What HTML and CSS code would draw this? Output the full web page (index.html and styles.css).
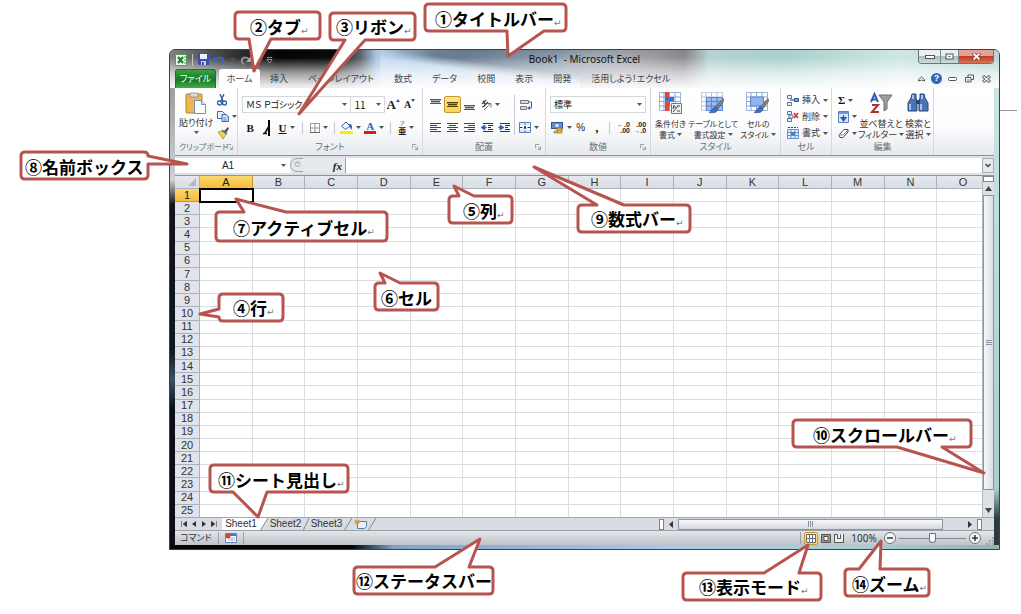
FILE: index.html
```html
<!DOCTYPE html>
<html lang="ja">
<head>
<meta charset="utf-8">
<title>Book1 - Microsoft Excel</title>
<link rel="stylesheet" href="styles.css">
</head>
<body>
<svg class="defs" aria-hidden="true">
  <symbol id="caret" viewBox="0 0 5 3"><path d="M0 0h5L2.500 3z" fill="#555"/></symbol>
  <symbol id="launch" viewBox="0 0 7 7"><path d="M.5 5V.5H5M3 3l3 3M6.500 3v3.500H3" fill="none" stroke="#8a929c"/></symbol>
  <symbol id="grid" viewBox="0 0 22 20"><path d="M.5 .5h21v18H.5z" fill="#fff" stroke="#9db3d6"/><path d="M5 .5v18M10.500 .5v18M16 .5v18M.5 5h21M.5 9.500h21M.5 14h21" stroke="#8ba6d0" fill="none"/></symbol>
  <symbol id="brush" viewBox="0 0 14 14"><path d="M13 0L6 8l2 2 6-8z" fill="#8b8378" stroke="#4d4a48" stroke-width=".6"/><path d="M6 7.500C3 8 3 12 0 13c4 1 8 0 8.500-3.500z" fill="#3f6fbd" stroke="#2c4f92" stroke-width=".5"/></symbol>
</svg>

<main class="window">
  <header class="chrome">
    <div class="titlebar">
      <div class="quick">
        <svg width="12" height="12" viewBox="0 0 12 12"><rect x=".5" y=".5" width="11" height="11" rx="1" fill="#eaf6e6" stroke="#4f9c4a"/><path d="M3 3l5 6M8 3L3 9" stroke="#1d7a2c" stroke-width="2"/><path d="M9 3h2M9 6h2M9 9h2" stroke="#59a957"/></svg>
        <i class="rule"></i>
        <button type="button" aria-label="上書き保存"><svg width="11" height="11" viewBox="0 0 11 11"><path d="M0 0h11v11H1L0 10z" fill="#3d4fae"/><path d="M2 0h7v5H2z" fill="#eef2fb"/><path d="M3 7h5v4H3z" fill="#c9d3ea"/><path d="M4 8h1.500v3H4z" fill="#26357f"/></svg></button>
        <button type="button" aria-label="元に戻す"><svg width="11" height="10" viewBox="0 0 11 10"><path d="M2 4c4-3 8-1 7 3q-.5 1.500-2 2" fill="none" stroke="#3b66b4" stroke-width="2"/><path d="M0 1v6h5z" fill="#3b66b4"/></svg></button>
        <svg class="caret" aria-hidden="true"><use href="#caret"/></svg>
        <button type="button" aria-label="やり直し"><svg width="11" height="10" viewBox="0 0 11 10"><path d="M9 4C5 1 1 3 2 7q.5 1.500 2 2" fill="none" stroke="#8d9196" stroke-width="2"/><path d="M11 1v6H6z" fill="#a7abb0"/></svg></button>
        <button type="button" class="custom" aria-label="カスタマイズ"><svg width="7" height="6" viewBox="0 0 7 6"><path d="M1 .5h5M1 2.500h5L3.500 6z" stroke="#ddd" stroke-width=".6" fill="#111"/></svg></button>
      </div>
      <h1>Book1&nbsp; - Microsoft Excel</h1>
      <div class="controls">
        <button type="button" class="min" aria-label="最小化"><svg width="10" height="4"><rect x=".5" y=".5" width="9" height="3" fill="#fff" stroke="#555"/></svg></button>
        <button type="button" class="max" aria-label="最大化"><svg width="9" height="7"><rect x="1" y="1" width="7" height="5" fill="#fff" stroke="#555"/><path d="M3.500 3.500h2" stroke="#555"/></svg></button>
        <button type="button" class="close" aria-label="閉じる"><svg width="9" height="7" viewBox="0 0 9 7"><path d="M1 0l7 7M8 0L1 7" stroke="#6b3b37" stroke-width="3.200"/><path d="M1.500 .5l6 6M7.500 .5l-6 6" stroke="#fff" stroke-width="1.800"/></svg></button>
      </div>
    </div>
    <nav class="tabs">
      <button type="button" class="file">ファイル</button>
      <button type="button" class="active">ホーム</button>
      <button type="button">挿入</button>
      <button type="button">ページレイアウト</button>
      <button type="button">数式</button>
      <button type="button">データ</button>
      <button type="button">校閲</button>
      <button type="button">表示</button>
      <button type="button">開発</button>
      <button type="button">活用しよう！エクセル</button>
      <div class="book-tools">
        <button type="button" aria-label="リボンの最小化"><svg width="7" height="6"><path d="M.5 5V3.500L3.500 1l3 2.500V5L3.500 4z" fill="#fff" stroke="#555"/></svg></button>
        <button type="button" aria-label="ヘルプ" class="help">?</button>
        <button type="button" aria-label="ブックの最小化"><svg width="9" height="4"><rect x=".5" y=".5" width="8" height="3" rx="1" fill="#fff" stroke="#555"/></svg></button>
        <button type="button" aria-label="元のサイズに戻す"><svg width="9" height="9"><path d="M3 3V1h5.500v4.500H6M.5 3.500h5.500v4.500H.5zM2 6h2.500" fill="#fff" stroke="#555"/></svg></button>
        <button type="button" aria-label="ブックを閉じる"><svg width="9" height="8"><path d="M1 1l7 6M8 1L1 7" stroke="#555" stroke-width="3"/><path d="M1.500 1.500l6 5M7.500 1.500l-6 5" stroke="#fff" stroke-width="1.200"/></svg></button>
      </div>
    </nav>
  </header>

  <section class="ribbon" aria-label="ホーム">
    <div class="group clipboard">
      <div class="tools">
        <button type="button" class="big paste"><svg width="22" height="22" viewBox="0 0 22 22"><rect x="1" y="2" width="16" height="19" rx="1" fill="#edb64f" stroke="#b98226"/><path d="M5 1h8v4H5z" fill="#d9dde2" stroke="#7a828c" stroke-width=".7"/><path d="M9.500 8.500h7l4 4v9h-11z" fill="#fafcff" stroke="#7890b5"/><path d="M16.500 8.500v4h4" fill="#d7e2f3" stroke="#7890b5"/></svg>貼り付け<svg class="caret"><use href="#caret"/></svg></button>
        <div class="stack">
          <button type="button" aria-label="切り取り"><svg width="10" height="12" viewBox="0 0 10 12"><path d="M3 0l3 7M7 0L4 7" stroke="#35558f" stroke-width="1.300"/><circle cx="2.500" cy="9" r="2" fill="none" stroke="#2f5eb5" stroke-width="1.400"/><circle cx="7.500" cy="9" r="2" fill="none" stroke="#2f5eb5" stroke-width="1.400"/></svg></button>
          <button type="button" aria-label="コピー"><svg width="12" height="11" viewBox="0 0 12 11"><path d="M.5 .5h5l2 2v5h-7z" fill="#eaf1fc" stroke="#3d66b2"/><path d="M5 3.500h4l2.500 2v5H5z" fill="#cfdff7" stroke="#3d66b2"/><path d="M6.500 7h3M6.500 9h3" stroke="#3d66b2" stroke-width=".7"/></svg><svg class="caret"><use href="#caret"/></svg></button>
          <button type="button" aria-label="書式のコピー"><svg width="12" height="12" viewBox="0 0 12 12"><path d="M7 4l4-4 1 1.500L9 6z" fill="#4d4d66"/><path d="M1 5l4-1 4 3-3 5z" fill="#f2d255" stroke="#a68425" stroke-width=".7"/><path d="M5 3l5 4" stroke="#58627a" stroke-width="1.400"/></svg></button>
        </div>
      </div>
      <h2>クリップボード<svg class="launch"><use href="#launch"/></svg></h2>
    </div>

    <div class="group font">
      <div class="tools column">
        <div class="line">
          <label class="combo wide"><input type="text" value="ＭＳ Ｐゴシック" aria-label="フォント"><svg class="caret"><use href="#caret"/></svg></label>
          <label class="combo size"><input type="text" value="11" aria-label="フォント サイズ"><svg class="caret"><use href="#caret"/></svg></label>
          <button type="button" class="grow" aria-label="フォント サイズの拡大">A<svg width="4" height="3"><path d="M0 3h4L2 0z" fill="#2b55b5"/></svg></button>
          <button type="button" class="shrink" aria-label="フォント サイズの縮小">A<svg width="4" height="3"><path d="M0 0h4L2 3z" fill="#2b55b5"/></svg></button>
        </div>
        <div class="line">
          <button type="button" class="glyph"><b>B</b></button>
          <button type="button" class="glyph" aria-label="斜体"><svg width="8" height="18" viewBox="0 0 8 18"><path d="M6 1v16" stroke="#000" stroke-width="2"/><path d="M6 7l-4 7M0 14.500h4" stroke="#111" stroke-width="1.600"/></svg></button>
          <button type="button" class="glyph drop"><u>U</u><svg class="caret"><use href="#caret"/></svg></button>
          <i class="rule"></i>
          <button type="button" class="drop" aria-label="罫線"><svg width="10" height="10"><path d="M.5 .5h9v9h-9zM5 0v10M0 5h10" fill="none" stroke="#999"/><path d="M0 9.500h10" stroke="#666"/></svg><svg class="caret"><use href="#caret"/></svg></button>
          <i class="rule"></i>
          <button type="button" class="drop" aria-label="塗りつぶしの色"><svg width="13" height="13" viewBox="0 0 13 13"><path d="M1.500 5L6 1l4 4-4.500 3.500z" fill="#f3f6fb" stroke="#3f5f95"/><path d="M9 3c3 0 3.500 2 2.500 6C10 7 10 6 9 5z" fill="#2f62b8"/><path d="M0 10h13v3H0z" fill="#ffee00"/></svg><svg class="caret"><use href="#caret"/></svg></button>
          <button type="button" class="drop color" aria-label="フォントの色"><span>A</span><svg class="caret"><use href="#caret"/></svg></button>
          <i class="rule"></i>
          <button type="button" class="drop" aria-label="ふりがな"><span class="ruby"><small>ア</small><b>亜</b></span><svg class="caret"><use href="#caret"/></svg></button>
        </div>
      </div>
      <h2>フォント<svg class="launch"><use href="#launch"/></svg></h2>
    </div>

    <div class="group align">
      <div class="tools">
        <div class="column">
          <div class="line">
            <button type="button" aria-label="上揃え"><svg width="11" height="13"><path d="M0 1.500h11M1 3.500h9M0 5.500h11" stroke="#555"/><path d="M0 2.500h11M1 4.500h9" stroke="#b5b5b5"/></svg></button>
            <button type="button" class="on" aria-label="上下中央揃え"><svg width="11" height="13"><path d="M0 4.500h11M1 6.500h9M0 8.500h11" stroke="#554200"/><path d="M0 5.500h11M1 7.500h9" stroke="#bd9531"/></svg></button>
            <button type="button" aria-label="下揃え"><svg width="11" height="13"><path d="M0 7.500h11M1 9.500h9M0 11.500h11" stroke="#555"/><path d="M0 8.500h11M1 10.500h9" stroke="#b5b5b5"/></svg></button>
            <button type="button" class="drop" aria-label="方向"><svg width="11" height="11" viewBox="0 0 11 11"><path d="M1 5l4-4M3 7l4-4M2 2l3 4M1 8l3-1" stroke="#444" stroke-width="1.300"/><path d="M3 11l6-6M6 4.500h4v4" stroke="#777" fill="none"/></svg><svg class="caret"><use href="#caret"/></svg></button>
          </div>
          <div class="line">
            <button type="button" aria-label="左揃え"><svg width="11" height="9"><path d="M0 .5h11M0 2.500h7M0 4.500h11M0 6.500h7M0 8.500h11" stroke="#444"/></svg></button>
            <button type="button" aria-label="中央揃え"><svg width="11" height="9"><path d="M0 .5h11M2 2.500h7M0 4.500h11M2 6.500h7M0 8.500h11" stroke="#444"/></svg></button>
            <button type="button" aria-label="右揃え"><svg width="11" height="9"><path d="M0 .5h11M4 2.500h7M0 4.500h11M4 6.500h7M0 8.500h11" stroke="#444"/></svg></button>
            <button type="button" aria-label="インデントを減らす"><svg width="12" height="9"><path d="M2 .5h10M7 2.500h5M7 4.500h3M7 6.500h5M2 8.500h10" stroke="#333"/><path d="M0 4.500L4 2v5zM3 4.500h3" fill="#2b5fc0" stroke="#2b5fc0" stroke-width=".8"/></svg></button>
            <button type="button" aria-label="インデントを増やす"><svg width="12" height="9"><path d="M2 .5h10M7 2.500h5M7 4.500h3M7 6.500h5M2 8.500h10" stroke="#333"/><path d="M6 4.500L2 2v5zM0 4.500h3" fill="#2b5fc0" stroke="#2b5fc0" stroke-width=".8"/></svg></button>
          </div>
        </div>
        <i class="rule tall"></i>
        <div class="column">
          <div class="line"><button type="button" aria-label="折り返して全体を表示する"><svg width="12" height="12" viewBox="0 0 12 12"><path d="M.5 1.500h8v3h-8zM.5 7.500h6v3h-6z" fill="#cfdcf0" stroke="#777"/><path d="M9 3h2.500v6H9" fill="none" stroke="#2f62b8"/><path d="M7 9l3-2v4z" fill="#2f62b8"/></svg></button></div>
          <div class="line"><button type="button" class="drop" aria-label="セルを結合して中央揃え"><svg width="12" height="11" viewBox="0 0 12 11"><path d="M.5 .5h11v10H.5zM6 0v3M6 8v3" fill="#dce8f8" stroke="#5d7fb5"/><path d="M1 3.500h10v4H1z" fill="#fff"/><path d="M1 5.500h2.500M8.500 5.500H11M5 7l1-3 1 3" stroke="#333" fill="none"/></svg><svg class="caret"><use href="#caret"/></svg></button></div>
        </div>
      </div>
      <h2>配置<svg class="launch"><use href="#launch"/></svg></h2>
    </div>

    <div class="group number">
      <div class="tools column">
        <div class="line"><label class="combo full"><input type="text" value="標準" aria-label="表示形式"><svg class="caret"><use href="#caret"/></svg></label></div>
        <div class="line">
          <button type="button" class="drop currency" aria-label="通貨表示形式"><svg width="13" height="12" viewBox="0 0 13 12"><rect x=".5" y=".5" width="11" height="6" fill="#5e8edc" stroke="#2e5197"/><circle cx="6" cy="3.500" r="1.700" fill="#dbe7fa"/><path d="M6 6h5v5H6z" fill="#e8bd45" stroke="#9d7620" stroke-width=".8"/><path d="M6 8h5M3 9h3v2H3z" stroke="#9d7620" stroke-width=".8" fill="#ecd06e"/></svg><svg class="caret"><use href="#caret"/></svg></button>
          <button type="button" class="pct">%</button>
          <button type="button" class="comma">,</button>
          <i class="rule"></i>
          <button type="button" class="dec" aria-label="小数点以下の表示桁数を増やす"><span><em>←</em>.0</span><span>.00</span></button>
          <button type="button" class="dec" aria-label="小数点以下の表示桁数を減らす"><span>.00</span><span><em>→</em>.0</span></button>
        </div>
      </div>
      <h2>数値<svg class="launch"><use href="#launch"/></svg></h2>
    </div>

    <div class="group style">
      <div class="tools">
        <button type="button" class="big"><svg width="24" height="23" viewBox="0 0 24 23"><use href="#grid" width="22" height="20"/><path d="M6 0h4v5H6zM6 14h4v5H6z" fill="#e0473a"/><path d="M6 5h9v4.500H6z" fill="#3f6fd0"/><path d="M6 10h5v4H6z" fill="#e0473a"/><path d="M12.500 11.500h10v10h-10z" fill="#eef2f7" stroke="#777"/><path d="M14 15h3M15 13l-1 4M18 14h3M18 19h3M14 20l5-6" stroke="#444"/></svg>条件付き<span>書式<svg class="caret"><use href="#caret"/></svg></span></button>
        <button type="button" class="big"><svg width="24" height="23" viewBox="0 0 24 23"><path d="M5 5h16v13H5z" fill="#86aef0"/><use href="#grid" width="22" height="20" opacity=".65"/><path d="M5.500 5.500h16v13h-16zM10.500 5v13M16 5v13M5 9.500h16M5 14h16" fill="#79a5ee" fill-opacity=".6" stroke="#5b86cf"/><use href="#brush" x="8" y="6" width="15" height="16"/></svg>テーブルとして<span>書式設定<svg class="caret"><use href="#caret"/></svg></span></button>
        <button type="button" class="big"><svg width="24" height="23" viewBox="0 0 24 23"><use href="#grid" width="22" height="20"/><path d="M4.500 5h13v9h-13z" fill="#8eb4f2" stroke="#5b86cf"/><use href="#brush" x="8" y="6" width="15" height="16"/></svg>セルの<span>スタイル<svg class="caret"><use href="#caret"/></svg></span></button>
      </div>
      <h2>スタイル</h2>
    </div>

    <div class="group cell">
      <div class="tools stack">
        <button type="button"><svg width="12" height="11" viewBox="0 0 12 11"><path d="M.5 .5h4v3h-4zM.5 7.500h4v3h-4z" fill="#e8effa" stroke="#5576ab"/><path d="M7.500 3.500h4v3h-4z" fill="#7fa6e6" stroke="#2f4f90"/><path d="M3 5h4" stroke="#333"/></svg>挿入<svg class="caret"><use href="#caret"/></svg></button>
        <button type="button"><svg width="12" height="11" viewBox="0 0 12 11"><path d="M.5 .5h4v3h-4zM.5 7.500h4v3h-4zM2 4h4v3H2z" fill="#e8effa" stroke="#5576ab"/><path d="M7 2l4 5M11 2L7 7" stroke="#d9392b" stroke-width="1.700"/></svg>削除<svg class="caret"><use href="#caret"/></svg></button>
        <button type="button"><svg width="12" height="12" viewBox="0 0 12 12"><path d="M.5 2.500h11v9H.5zM4 2v9M8 2v9M0 8.500h12M0 5.500h12" fill="#e3edfb" stroke="#6e8fc4"/><path d="M4 5h4v3H4z" fill="#4879cf"/><path d="M1 .5h10" stroke="#444" stroke-dasharray="2 1"/></svg>書式<svg class="caret"><use href="#caret"/></svg></button>
      </div>
      <h2>セル</h2>
    </div>

    <div class="group edit">
      <div class="tools">
        <div class="stack">
          <button type="button" class="sigma">Σ<svg class="caret"><use href="#caret"/></svg></button>
          <button type="button" aria-label="フィル"><svg width="11" height="12" viewBox="0 0 11 12"><path d="M.5 .5h10v11H.5z" fill="#dce8fa" stroke="#5d7fb5"/><path d="M1 1h9v2H1z" fill="#6f97dc"/><path d="M5.500 4v3M3 6.500h5L5.500 10z" stroke="#2159c4" stroke-width="1.200" fill="#2159c4"/></svg><svg class="caret"><use href="#caret"/></svg></button>
          <button type="button" aria-label="クリア"><svg width="11" height="9" viewBox="0 0 11 9"><path d="M1 6l5-5.500h4L10 3 5 8.500H2z" fill="#fff" stroke="#444d62"/><path d="M1 6h4l5-5" fill="none" stroke="#7d88a0"/></svg><svg class="caret"><use href="#caret"/></svg></button>
        </div>
        <button type="button" class="big"><svg width="24" height="23" viewBox="0 0 24 23"><path d="M10 3h13l-5 7v7l-3 2v-9z" fill="#9a9da2" stroke="#6b6e73"/><path d="M2 10l3.500-8L9 10M3.500 7.500h4" fill="none" stroke="#2e5fb3" stroke-width="2"/><path d="M3 13h6L3 20h7" fill="none" stroke="#a8322d" stroke-width="2"/></svg>並べ替えと<span>フィルター<svg class="caret"><use href="#caret"/></svg></span></button>
        <button type="button" class="big"><svg width="22" height="23" viewBox="0 0 22 23"><path d="M5 2h4v4l1 3v10H1v-8l3-5zM13 2h4l1 4 3 5v8h-9V9l1-3z" fill="#4a76b8" stroke="#27467c"/><path d="M9 8h4v4H9z" fill="#27467c"/><path d="M3 12v6M14 12v6M6 3v4M15 3v4" stroke="#c3d6f2" stroke-width="1.600"/></svg>検索と<span>選択<svg class="caret"><use href="#caret"/></svg></span></button>
      </div>
      <h2>編集</h2>
    </div>
  </section>

  <div class="formula">
    <label class="name"><input type="text" value="A1" aria-label="名前ボックス"><svg class="caret dark"><use href="#caret"/></svg></label>
    <div class="fx"><svg width="13" height="14"><path d="M13 .5H7a6 6 0 0 0 0 13h6" fill="#e4e7ec" stroke="#9aa1aa"/><circle cx="7.500" cy="6" r="3" fill="#bcc2ca"/><path d="M6 6.500h3" stroke="#fff"/></svg><button type="button" aria-label="関数の挿入"><i>fx</i></button></div>
    <input type="text" class="entry" aria-label="数式バー">
    <button type="button" class="expand" aria-label="数式バーの展開"><svg width="6" height="5"><path d="M.5 1L3 3.500 5.500 1" fill="none" stroke="#444" stroke-width="1.500"/></svg></button>
  </div>

  <div class="sheet">
    <div class="cells"><table><thead><tr id="columns"></tr></thead><tbody id="rows"></tbody></table></div>
    <div class="vscroll">
      <i class="split"></i>
      <svg width="7" height="5"><path d="M0 5h7L3.500 0z" fill="#444"/></svg>
      <div class="thumb"><i></i></div>
      <svg width="7" height="5"><path d="M0 0h7L3.500 5z" fill="#444"/></svg>
    </div>
  </div>

  <div class="sheetbar">
    <button type="button" aria-label="先頭のシート"><svg width="6" height="6"><path d="M.5 0v6M6 0v6L2 3z" stroke="#444" stroke-width=".6" fill="#333"/></svg></button>
    <button type="button" aria-label="前のシート"><svg width="4" height="6"><path d="M4 0v6L0 3z" fill="#333"/></svg></button>
    <button type="button" aria-label="次のシート"><svg width="4" height="6"><path d="M0 0v6l4-3z" fill="#333"/></svg></button>
    <button type="button" aria-label="最後のシート"><svg width="6" height="6"><path d="M5.500 0v6M0 0v6l4-3z" stroke="#444" stroke-width=".6" fill="#333"/></svg></button>
    <button type="button" class="tab current">Sheet1</button>
    <svg class="slash" width="8" height="13"><path d="M0 0h8L0 13z" fill="#fff"/><path d="M8 0L0 13" stroke="#888"/></svg>
    <button type="button" class="tab">Sheet2</button>
    <svg class="slash" width="6" height="13"><path d="M6 0L0 13" stroke="#888"/></svg>
    <button type="button" class="tab">Sheet3</button>
    <svg class="slash" width="8" height="13"><path d="M8 0L0 13" stroke="#888"/></svg>
    <button type="button" class="new" aria-label="ワークシートの挿入"><svg width="13" height="11" viewBox="0 0 13 11"><path d="M3.500 2.500h9v5l-2 2h-7z" fill="#e9f0fb" stroke="#5a78ac"/><path d="M3 0v6M0 3h6M1 1l4 4M5 1L1 5" stroke="#e2902a"/></svg></button>
    <svg class="slash" width="8" height="13"><path d="M8 0L0 13" stroke="#888"/></svg>
    <div class="hscroll">
      <i class="split"></i>
      <svg width="4" height="7"><path d="M4 0v7L0 3.500z" fill="#333"/></svg>
      <div class="thumb"><i></i></div>
      <svg width="4" height="7"><path d="M0 0v7l4-3.500z" fill="#333"/></svg>
      <i class="split"></i>
    </div>
  </div>

  <footer class="status">
    <span>コマンド</span>
    <i class="rule"></i>
    <button type="button" aria-label="マクロの記録"><svg width="12" height="10" viewBox="0 0 12 10"><path d="M.5 .5h11v9H.5z" fill="#fff" stroke="#6682b5"/><path d="M1 1h10v2H1z" fill="#4a77c5"/><path d="M3 5h7M3 7h7M7 4v5" stroke="#a9bcdc"/><circle cx="3" cy="3" r="2.500" fill="#d8442e"/></svg></button>
    <i class="rule"></i>
    <div class="view">
      <i class="rule"></i>
      <button type="button" class="on" aria-label="標準"><svg width="10" height="9"><path d="M.5 .5h9v8h-9zM3.500 0v9M6.500 0v9M0 4.500h10" fill="#fff" stroke="#696969"/></svg></button>
      <button type="button" aria-label="ページ レイアウト"><svg width="10" height="9"><path d="M.5 .5h9v8h-9z" fill="#999" stroke="#555"/><path d="M3 2.500h4v4H3z" fill="#fff" stroke="#555"/></svg></button>
      <button type="button" aria-label="改ページ プレビュー"><svg width="10" height="9"><path d="M.5 0v8.500h9V0M.5 .5h3v4h3v-4" fill="#eee" stroke="#555"/></svg></button>
      <button type="button" class="zoom">100%</button>
      <button type="button" aria-label="縮小"><svg width="12" height="12"><circle cx="6" cy="6" r="5.500" fill="#f8f9fa" stroke="#6c737c"/><path d="M3 6h6" stroke="#333" stroke-width="1.500"/></svg></button>
      <input type="range" min="0" max="100" value="50" aria-label="ズーム">
      <button type="button" aria-label="拡大"><svg width="12" height="12"><circle cx="6" cy="6" r="5.500" fill="#f8f9fa" stroke="#6c737c"/><path d="M3 6h6M6 3v6" stroke="#333" stroke-width="1.500"/></svg></button>
      <svg class="grip" width="8" height="8"><path d="M6 1h2M6 4h2M3 4h2M6 7h2M3 7h2M0 7h2" stroke="#a3a9b1" stroke-width="2"/></svg>
    </div>
  </footer>
</main>

<div class="divider"></div>

<aside class="notes" aria-label="各部の名称">
  <svg width="1021" height="614">
    <path d="M429 4H562q4 0 4 4V27q0 4-4 4H544L508 56 507 31H429q-4 0-4-4V8q0-4 4-4z"/>
    <path d="M239 12H316q4 0 4 4V35q0 4-4 4H271L254 71 249 39H239q-4 0-4-4V16q0-4 4-4z"/>
    <path d="M334 13H411q4 0 4 4V36q0 4-4 4H365L299 114 345 40H334q-4 0-4-4V17q0-4 4-4z"/>
    <path d="M25 152H144q4 0 4 4L187 164 148 164V175q0 4-4 4H25q-4 0-4-4V156q0-4 4-4z"/>
    <path d="M220 212H244L236 199 286 212H383q4 0 4 4V237q0 4-4 4H220q-4 0-4-4V216q0-4 4-4z"/>
    <path d="M223 294H279q4 0 4 4V317q0 4-4 4H223q-4 0-4-4L200 314 219 309V298q0-4 4-4z"/>
    <path d="M453 196H459L454 186 474 196H508q4 0 4 4V219q0 4-4 4H453q-4 0-4-4V200q0-4 4-4z"/>
    <path d="M582 205H597L534 167 624 205H686q4 0 4 4V228q0 4-4 4H582q-4 0-4-4V209q0-4 4-4z"/>
    <path d="M379 283H385L380 273 400 283H434q4 0 4 4V306q0 4-4 4H379q-4 0-4-4V287q0-4 4-4z"/>
    <path d="M797 420H967q4 0 4 4V443q0 4-4 4H942L984 473 897 447H797q-4 0-4-4V424q0-4 4-4z"/>
    <path d="M214 465H344q4 0 4 4V488q0 4-4 4H267L258 517 233 492H214q-4 0-4-4V469q0-4 4-4z"/>
    <path d="M358 567H435L480 539 469 567H489q4 0 4 4V590q0 4-4 4H358q-4 0-4-4V571q0-4 4-4z"/>
    <path d="M687 573H764L808 545 799 573H817q4 0 4 4V596q0 4-4 4H687q-4 0-4-4V577q0-4 4-4z"/>
    <path d="M849 569H859L881 541 880 569H925q4 0 4 4V592q0 4-4 4H849q-4 0-4-4V573q0-4 4-4z"/>
  </svg>
  <p class="n1">①タイトルバー<span>↵</span></p>
  <p class="n2">②タブ<span>↵</span></p>
  <p class="n3">③リボン<span>↵</span></p>
  <p class="n4">④行<span>↵</span></p>
  <p class="n5">⑤列<span>↵</span></p>
  <p class="n6">⑥セル</p>
  <p class="n7">⑦アクティブセル<span>↵</span></p>
  <p class="n8">⑧名前ボックス</p>
  <p class="n9">⑨数式バー<span>↵</span></p>
  <p class="n10">⑩スクロールバー<span>↵</span></p>
  <p class="n11">⑪シート見出し<span>↵</span></p>
  <p class="n12">⑫ステータスバー</p>
  <p class="n13">⑬表示モード<span>↵</span></p>
  <p class="n14">⑭ズーム<span>↵</span></p>
</aside>
<script src="script.js"></script>
</body>
</html>
```

FILE: styles.css
```css
* { box-sizing: border-box; }

body {
  margin: 0;
  padding: 49px 21px 0 169px;
  background: #fff;
  color: #333;
  font: 9px/12px "Noto Sans CJK JP", sans-serif;
  font-feature-settings: "palt";
}

button, input { font: inherit; font-feature-settings: inherit; color: inherit; }
button { display: inline-flex; align-items: center; justify-content: center; margin: 0; padding: 0; border: 0; background: none; white-space: nowrap; }
svg { display: block; flex: none; }
h1, h2, p { margin: 0; font-weight: normal; }
.defs { position: absolute; width: 0; height: 0; }
.caret { width: 5px; height: 3px; }
.rule { width: 1px; height: 12px; background: #c5cad1; }

/* Window frame */
.window {
  padding: 0 5px 4px;
  border: 1px solid #3b4147;
  border-radius: 6px 6px 0 0;
  overflow: hidden;
  background:
    linear-gradient(90deg, #050608 0 22%, #7fa3cf 27%, #a9c9ea 60%, #a3cfd0 85%, #8fb5b2) bottom / 100% 4px no-repeat,
    linear-gradient(#85898d 0, #cfd2d4 26%, #111418 31%, #10161c 60%, #3b5266 66%, #0b0e12 72%) left / 5px 100% no-repeat,
    linear-gradient(#cde6e4 0, #a9cfc9 88%, #2b3a3c 94%) right / 5px 100% no-repeat;
}
.chrome {
  margin: 0 -5px;
  padding: 0 5px;
  background:
    linear-gradient(rgba(255,255,255,0) 20%, rgba(255,255,255,.6) 60%, rgba(255,255,255,.92) 95%),
    radial-gradient(ellipse 15% 50% at 50% 30%, rgba(255,255,255,.4), rgba(255,255,255,0)),
    linear-gradient(8deg, rgba(200,220,242,.9) 45%, rgba(200,220,242,0) 60%) 210px 0 / 200px 100% no-repeat,
    linear-gradient(90deg, #808386 0, #3a3b3d 7%, #050505 13%, #0a0a0a 20%, #5c6670 23%, #adc8e4 25%, #6b7f93 32%, #64788c 46%, #8b8e96 55%, #858289 62%, #b5d3d2 65%, #a9d0cc 74%, #cfe6e4 88%, #b5d6d3);
}
.titlebar { display: grid; grid-template-columns: 1fr auto 1fr; height: 19px; }
.titlebar h1 { color: #111; font: 10px/19px "Noto Sans", sans-serif; }
.quick { display: flex; align-items: center; gap: 5px; }
.quick .custom { margin-left: 10px; }
.controls { display: flex; justify-self: end; height: 14px; border: 1px solid #66777a; border-top: 0; border-radius: 0 0 4px 4px; overflow: hidden; }
.controls button { border-right: 1px solid #7c8b8d; background: linear-gradient(#e8f1f1 45%, #a9bcbc 50%, #cfdedd); }
.controls .min { width: 22px; }
.controls .max { width: 18px; }
.controls .close { width: 34px; border: 0; background: linear-gradient(#e4a195 45%, #c43b25 50%, #d9735a); }

/* Tabs */
.tabs { display: flex; height: 19px; color: #444; font-size: 9px; }
.tabs > button { padding: 0 10px; }
.tabs .file { width: 41px; margin-right: 3px; padding: 0; border: 1px solid #1d6f2c; border-bottom: 0; border-radius: 3px 3px 0 0; background: linear-gradient(#3fa03f, #147a2b 55%, #44ad3c); color: #fff; }
.tabs .active { width: 41px; padding: 0; border-radius: 3px 3px 0 0; background: #fff; }
.book-tools { display: flex; align-items: center; gap: 8px; margin-left: auto; padding-right: 3px; }
.book-tools .help { width: 11px; height: 11px; margin: 0 -2px; border-radius: 50%; background: #2e67bd; color: #fff; font: bold 9px/11px "Liberation Sans", sans-serif; }

/* Ribbon */
.ribbon { display: flex; border-bottom: 1px solid #8d949d; background: linear-gradient(#fff, #fdfdfe 55%, #e6e9ed); }
.group { display: flex; flex-direction: column; justify-content: space-between; height: 67px; padding: 4px 4px 2px; border-right: 1px solid #d5d9de; }
.group h2 { position: relative; color: #66707c; font-size: 9px; line-height: 12px; text-align: center; white-space: nowrap; }
.launch { position: absolute; right: 0; top: 3px; width: 6px; height: 6px; }
.tools { display: flex; justify-content: space-between; height: 49px; }
.column, .stack { display: flex; flex-direction: column; }
.tools.column, .tools > .column { justify-content: flex-start; gap: 4px; padding-top: 3px; }
.tools .stack, .tools.stack { justify-content: space-between; align-items: flex-start; }
.tools .stack button, .tools.stack button { height: 16px; gap: 3px; }
.line { display: flex; align-items: center; height: 19px; }
.line > button { width: 17px; height: 17px; }
.line > .drop { width: 24px; gap: 3px; }
.line > .rule { margin: 0 4px; }
.big { flex-direction: column; justify-content: flex-start; line-height: 11px; }
.big > svg:first-child { margin-bottom: 3px; }
.big span { display: flex; align-items: center; gap: 2px; }

.clipboard { width: 63px; }
.clipboard h2 { font-size: 8px; text-align: left; }
.clipboard .tools { justify-content: flex-start; gap: 4px; }
.paste .caret { margin-top: 3px; }
.font { width: 185px; }
.align { width: 123px; }
.number { width: 105px; }
.style { width: 130px; }
.style .big { font-size: 8px; }
.cell { width: 51px; }
.edit { width: 102px; padding-left: 2px; padding-right: 2px; }
.cell .tools { padding-left: 2px; }

.combo { display: flex; align-items: center; height: 17px; padding: 0 3px; border: 1px solid #d3d7dc; background: #fff; }
.combo input { flex: 1; min-width: 0; width: 0; padding: 0; border: 0; outline: 0; background: none; color: #111; }
.combo.wide { width: 112px; }
.combo.size { width: 35px; margin-left: -1px; font-size: 10px; }
.combo.full { flex: 1; }
.grow, .shrink { align-items: center; color: #222; font-family: "Liberation Serif", serif; font-weight: bold; }
.grow { font-size: 13px; }
.shrink { font-size: 10px; }
.grow svg, .shrink svg { align-self: flex-start; margin-top: 3px; }
.glyph { color: #111; font: bold 11px/14px "Liberation Serif", serif; }
.color span { border-bottom: 3px solid #e81123; color: #2f5eb5; font: bold 11px/10px "Liberation Serif", serif; padding: 0 2px; }
.ruby { display: flex; flex-direction: column; align-items: center; color: #222; }
.ruby b { font-size: 8px; line-height: 10px; }
.ruby small { font-size: 5px; line-height: 7px; }
.on { border: 1px solid #c69a2e; border-radius: 2px; background: linear-gradient(#ffe391, #ffd24f); }
.rule.tall { height: 40px; margin-top: 3px; }
.pct { color: #222; font: 10px/12px "Liberation Sans", sans-serif; }
.comma { color: #111; font: bold 13px/8px "Liberation Serif", serif; }
.dec { flex-direction: column; align-items: flex-end; color: #222; font: bold 7px/6px "Liberation Sans", sans-serif; }
.dec em { color: #2b5fc0; font-style: normal; }
.sigma { color: #111; font: bold 11px/12px "Liberation Serif", serif; }
.edit .stack { padding-left: 4px; }

/* Formula bar */
.formula { display: flex; padding: 2px 0; border-bottom: 1px solid #8d949d; background: #dde1e6; }
.formula label, .formula input { height: 15px; background: #fff; }
.name { display: flex; align-items: center; width: 115px; padding-right: 4px; }
.name input { flex: 1; width: 0; padding: 0; border: 0; color: #222; text-align: center; font: 10px "Liberation Sans", sans-serif; }
.fx { display: flex; justify-content: space-between; width: 55px; padding-right: 3px; background: #e6e9ed; }
.fx i { color: #222; font: italic bold 11px "Liberation Serif", serif; }
.entry { flex: 1; min-width: 0; padding: 0 4px; border: 0; border-left: 1px solid #9aa1aa; }
.expand { width: 12px; border: 1px solid #a5acb5; background: #e6e9ed; }

/* Worksheet */
.sheet { display: flex; background: #fff; }
.cells { flex: 1; min-width: 0; height: 341px; overflow: hidden; }
table { width: calc(100% + 8px); height: 342px; table-layout: fixed; border-collapse: separate; border-spacing: 0; color: #333; font: 11px/11px "Liberation Sans", sans-serif; }
th, td { padding: 0; border: solid #dcdde0; border-width: 0 1px 1px 0; }
th { font-weight: normal; background: #e0e4ea; border-color: #a9b1bd; }
thead th { height: 13px; background: linear-gradient(#e6e9ee, #d9dde4); }
thead th:first-child { width: 25px; }
thead svg { margin: 0 3px 0 auto; }
th.hot { background: linear-gradient(#fbd76a, #f4bc3a); border-color: #c9952c; color: #222; }
td.cursor { outline: 2px solid #000; outline-offset: -1px; }
.vscroll { display: flex; flex-direction: column; align-items: center; gap: 4px; width: 12px; padding-bottom: 4px; border-left: 1px solid #b3b9c1; background: #dde0e5; }
.vscroll .split { width: 11px; height: 6px; border: 1px solid #7c848e; background: #fff; }
.vscroll .thumb { display: grid; place-items: center; flex: 1; width: 11px; margin-bottom: 14px; border: 1px solid #8c949e; background: linear-gradient(90deg, #f6f7f9, #d9dde3); }
.thumb i { width: 6px; height: 6px; background: repeating-linear-gradient(#8c949e 0 1px, #e4e7eb 1px 2px); }

/* Sheet tabs and horizontal scroll bar */
.sheetbar { display: flex; align-items: center; height: 13px; padding-left: 4px; border-top: 1px solid #a0a7b0; background: #d9dde3; color: #333; font: 10px/12px "Liberation Sans", sans-serif; }
.sheetbar > button { width: 10px; height: 12px; }
.sheetbar > .tab { width: 35px; }
.sheetbar > .current { width: 38px; margin-left: 3px; background: #fff; }
.sheetbar > .new { width: 16px; }
.hscroll { display: flex; align-items: center; gap: 5px; width: 323px; height: 12px; margin: 0 12px 0 auto; }
.hscroll .split { width: 5px; height: 11px; border: 1px solid #7c848e; background: #fff; }
.hscroll .thumb { display: grid; place-items: center; flex: 1; height: 11px; margin-right: 20px; border: 1px solid #8c949e; background: linear-gradient(#f6f7f9, #d4d8de); }
.hscroll .thumb i { background: repeating-linear-gradient(90deg, #8c949e 0 1px, #e4e7eb 1px 2px); }

/* Status bar */
.status { display: flex; align-items: center; gap: 6px; height: 15px; padding-left: 5px; border-top: 1px solid #9aa1aa; background: linear-gradient(#e3e6e9, #bfc4ca); color: #333; }
.status > .rule, .view > .rule { background: #999fa7; }
.view { display: flex; align-items: center; gap: 3px; margin-left: auto; }
.view .on { width: 14px; height: 13px; }
.view .zoom { width: 34px; font: 10px/12px "Noto Sans", sans-serif; }
.view input { width: 67px; height: 11px; margin: 0; background: linear-gradient(#7f868f, #7f868f) center / 100% 1px no-repeat; appearance: none; }
.view input::-webkit-slider-thumb { width: 7px; height: 10px; border: 1px solid #6c737c; border-radius: 1px 1px 4px 4px; background: #f8f9fa; appearance: none; }
.grip { align-self: flex-end; margin-left: 2px; }

/* Callouts floating over the window */
.divider { position: absolute; top: 110px; right: 4px; width: 17px; height: 1px; background: #999; }
.notes { position: absolute; left: 0; top: 0; color: #000; font: bold 17px/20px "Noto Sans CJK JP", sans-serif; font-feature-settings: normal; }
.notes path { fill: #fff; stroke: #b85450; stroke-width: 3; stroke-linejoin: round; }
.notes p { position: absolute; font-weight: bold; white-space: nowrap; }
.notes span { color: #777; font: 9px "DejaVu Sans", sans-serif; }
.n1 { left: 435px; top: 9px; }
.n2 { left: 250px; top: 17px; }
.n3 { left: 336px; top: 17px; }
.n4 { left: 233px; top: 298px; }
.n5 { left: 463px; top: 201px; }
.n6 { left: 381px; top: 288px; }
.n7 { left: 233px; top: 218px; }
.n8 { left: 25px; top: 157px; }
.n9 { left: 591px; top: 209px; }
.n10 { left: 813px; top: 425px; }
.n11 { left: 218px; top: 470px; }
.n12 { left: 356px; top: 571px; }
.n13 { left: 699px; top: 577px; }
.n14 { left: 852px; top: 574px; }
```

FILE: script.js
```js
const letters = "ABCDEFGHIJKLMNO".split("");
const corner = '<th><svg width="8" height="8"><path d="M8 0v8H0z" fill="#b4bac3"/></svg></th>';

document.getElementById("columns").innerHTML = corner + letters
  .map((letter) => `<th scope="col"${letter === "A" ? ' class="hot"' : ""}>${letter}</th>`)
  .join("");

document.getElementById("rows").innerHTML = Array.from({ length: 25 }, (_, index) => {
  const hot = index === 0;
  const cells = letters
    .map((letter) => (hot && letter === "A" ? '<td class="cursor"></td>' : "<td></td>"))
    .join("");
  return `<tr><th scope="row"${hot ? ' class="hot"' : ""}>${index + 1}</th>${cells}</tr>`;
}).join("");
```
